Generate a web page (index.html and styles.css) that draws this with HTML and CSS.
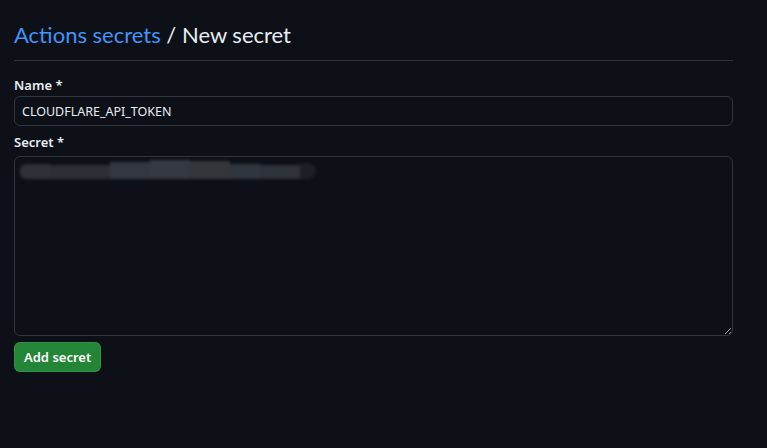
FILE: index.html
```html
<!DOCTYPE html>
<html lang="en">
<head>
    <meta charset="UTF-8">
    <meta name="viewport" content="width=device-width, initial-scale=1.0">
    <title>New secret</title>
    <link rel="stylesheet" href="styles.css">
</head>
<body>
    <div class="page">
        <h2 class="subhead">
            <a href="#" class="crumb">Actions secrets</a> / New secret
        </h2>

        <form class="secret-form">
            <div class="field">
                <label class="field-label" for="name">Name *</label>
                <input class="field-input" id="name" type="text" value="CLOUDFLARE_API_TOKEN">
            </div>
            <div class="field">
                <label class="field-label" for="secret">Secret *</label>
                <div class="secret-wrap">
                    <textarea class="field-textarea" id="secret"></textarea>
                    <!-- blurred value -->
                    <div class="blur">
                        <span class="b1"></span>
                        <span class="b2"></span>
                        <span class="b3"></span>
                        <span class="b4"></span>
                        <span class="b5"></span>
                        <span class="b6"></span>
                        <span class="b7"></span>
                        <span class="b8"></span>
                    </div>
                </div>
            </div>
            <button type="button" class="btn-primary">Add secret</button>
        </form>
    </div>
</body>
</html>
```

FILE: styles.css
```css
body {
    margin: 0;
    background-color: #0d1117;
    color: #e6edf3;
    font-family: "Noto Sans", "Open Sans", sans-serif;
    font-size: 14px;
    color-scheme: dark;
}

.page {
    width: 719px;
    padding: 18px 14px 0 14px;
}

.subhead {
    margin: 0;
    padding-bottom: 8px;
    border-bottom: 1px solid #30363d;
    font-family: Lato, "Noto Sans", sans-serif;
    font-size: 22px;
    font-weight: 400;
    line-height: 34px;
}

.crumb {
    color: #4493f8;
    text-decoration: none;
}

.secret-form {
    margin-top: 14px;
}

.field {
    margin-bottom: 6px;
}

.field-label {
    display: block;
    font-weight: 600;
    font-size: 13px;
    line-height: 21px;
}

.field-input,
.field-textarea {
    box-sizing: border-box;
    width: 100%;
    background-color: #0d1117;
    border: 1px solid #30363d;
    border-radius: 6px;
    color: #e6edf3;
    font-family: inherit;
    font-size: 12.5px;
    outline: none;
}

.field-input {
    display: block;
    height: 30px;
    padding: 0 7px;
}

.secret-wrap {
    position: relative;
    margin-top: 3px;
}

.field-textarea {
    display: block;
    height: 180px;
    resize: vertical;
    padding: 6px 7px;
}

.blur {
    position: absolute;
    left: 6px;
    top: 3px;
    display: flex;
    align-items: flex-end;
    height: 20px;
    filter: blur(1.5px);
}

.blur span {
    display: block;
    height: 16px;
    background-color: #2f333a;
}

.blur .b1 { width: 30px; height: 15px; border-radius: 6px 0 0 6px; background-color: #2e3137; }
.blur .b2 { width: 60px; height: 14px; background-color: #2c3036; }
.blur .b3 { width: 40px; height: 17px; background-color: #333840; }
.blur .b4 { width: 40px; height: 19px; background-color: #353941; }
.blur .b5 { width: 40px; height: 18px; background-color: #33373c; }
.blur .b6 { width: 30px; height: 15px; background-color: #30363d; }
.blur .b7 { width: 40px; height: 14px; background-color: #2e3339; }
.blur .b8 { width: 16px; height: 16px; border-radius: 0 8px 8px 0; background-color: #1c1f24; }

.btn-primary {
    display: block;
    height: 30px;
    padding: 0 9px;
    margin-top: 2px;
    background-color: #238636;
    border: 1px solid rgba(240, 246, 252, 0.1);
    border-radius: 6px;
    color: #ffffff;
    font-family: inherit;
    font-size: 13px;
    font-weight: 600;
    cursor: pointer;
}
```
